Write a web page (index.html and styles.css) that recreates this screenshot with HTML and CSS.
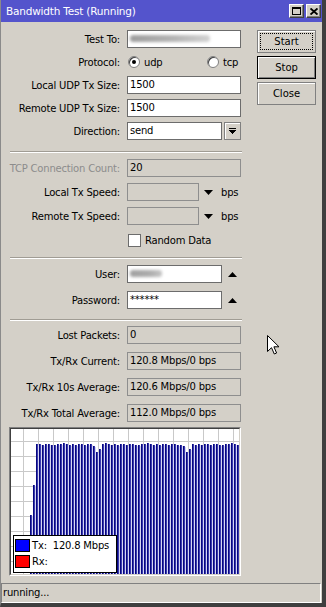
FILE: index.html
```html
<!DOCTYPE html>
<html lang="en">
<head>
    <meta charset="UTF-8">
    <title>Bandwidth Test (Running)</title>
    <link rel="stylesheet" href="styles.css">
</head>
<body>
    <div class="window">
        <div class="titlebar">
            <span class="title">Bandwidth Test (Running)</span>
            <div class="title-buttons">
                <span class="tbtn">
                    <svg width="9" height="8" viewBox="0 0 9 8" shape-rendering="crispEdges"><path d="M0 0h9v8h-9z M1 2v5h7v-5z" fill="#000" fill-rule="evenodd"/></svg>
                </span>
                <span class="tbtn">
                    <svg width="8" height="7" viewBox="0 0 8 7"><path d="M0.5 0.5l7 6M7.5 0.5l-7 6" stroke="#000" stroke-width="1.9"/></svg>
                </span>
            </div>
        </div>

        <div class="main">
            <div class="form">
                <div class="section s1">
                    <div class="row">
                        <span class="label">Test To:</span>
                        <div class="field"><span class="smudge"></span></div>
                    </div>
                    <div class="row">
                        <span class="label">Protocol:</span>
                        <span class="choice first"><span class="radio checked"></span>udp</span>
                        <span class="choice"><span class="radio"></span>tcp</span>
                    </div>
                    <div class="row">
                        <span class="label">Local UDP Tx Size:</span>
                        <div class="field">1500</div>
                    </div>
                    <div class="row">
                        <span class="label">Remote UDP Tx Size:</span>
                        <div class="field">1500</div>
                    </div>
                    <div class="row">
                        <span class="label">Direction:</span>
                        <div class="field mid">send</div>
                        <span class="drop">
                            <svg width="7" height="6" viewBox="0 0 7 6" shape-rendering="crispEdges"><path d="M0 0h7v1h-7z M0 2h7l-3.5 4z" fill="#000"/></svg>
                        </span>
                    </div>
                </div>
                <div class="sep"></div>

                <div class="section s2">
                    <div class="row">
                        <span class="label disabled">TCP Connection Count:</span>
                        <div class="field off">20</div>
                    </div>
                    <div class="row">
                        <span class="label">Local Tx Speed:</span>
                        <div class="field short off"></div>
                        <svg class="arrow" width="9" height="5" viewBox="0 0 9 5"><path d="M0 0h9l-4.5 5z" fill="#000"/></svg>
                        <span class="unit">bps</span>
                    </div>
                    <div class="row">
                        <span class="label">Remote Tx Speed:</span>
                        <div class="field short off"></div>
                        <svg class="arrow" width="9" height="5" viewBox="0 0 9 5"><path d="M0 0h9l-4.5 5z" fill="#000"/></svg>
                        <span class="unit">bps</span>
                    </div>
                    <div class="row indent">
                        <span class="check"></span>
                        <span class="check-text">Random Data</span>
                    </div>
                </div>
                <div class="sep"></div>

                <div class="section s3">
                    <div class="row">
                        <span class="label">User:</span>
                        <div class="field mid"><span class="smudge small"></span></div>
                        <svg class="arrow up" width="9" height="5" viewBox="0 0 9 5"><path d="M0 5h9l-4.5 -5z" fill="#000"/></svg>
                    </div>
                    <div class="row">
                        <span class="label">Password:</span>
                        <div class="field mid">******</div>
                        <svg class="arrow up" width="9" height="5" viewBox="0 0 9 5"><path d="M0 5h9l-4.5 -5z" fill="#000"/></svg>
                    </div>
                </div>
                <div class="sep"></div>

                <div class="section s4">
                    <div class="row">
                        <span class="label">Lost Packets:</span>
                        <div class="field off">0</div>
                    </div>
                    <div class="row">
                        <span class="label">Tx/Rx Current:</span>
                        <div class="field off">120.8 Mbps/0 bps</div>
                    </div>
                    <div class="row">
                        <span class="label">Tx/Rx 10s Average:</span>
                        <div class="field off">120.6 Mbps/0 bps</div>
                    </div>
                    <div class="row">
                        <span class="label">Tx/Rx Total Average:</span>
                        <div class="field off">112.0 Mbps/0 bps</div>
                    </div>
                </div>

                <div class="graph">
                    <div class="plot">
                        <svg width="228" height="145" viewBox="0 0 228 145" shape-rendering="crispEdges">
                            <defs>
                                <pattern id="grid" width="15" height="15" x="12" y="12" patternUnits="userSpaceOnUse">
                                    <rect width="15" height="1" fill="#c9c9c9"/>
                                    <rect width="1" height="15" fill="#c9c9c9"/>
                                </pattern>
                            </defs>
                            <rect width="228" height="145" fill="#fff"/>
                            <rect width="228" height="145" fill="url(#grid)"/>
                            <g id="bars"></g>
                        </svg>
                        <div class="legend">
                            <div class="item"><span class="swatch tx"></span>Tx:&nbsp; 120.8 Mbps</div>
                            <div class="item"><span class="swatch rx"></span>Rx:</div>
                        </div>
                    </div>
                </div>
            </div>

            <div class="actions">
                <button class="btn focus">Start</button>
                <button class="btn default">Stop</button>
                <button class="btn">Close</button>
            </div>
        </div>

        <div class="status">running...</div>

        <svg class="cursor" width="13" height="20" viewBox="0 0 13 20">
            <path d="M0.5 0.5V16.5L4.5 12.7L7.3 19L9.6 18L6.9 11.8H12Z" fill="#fff" stroke="#000" stroke-width="1" stroke-linejoin="miter"/>
        </svg>
    </div>

    <script>
        // Tx bars: two ramp-up samples, then steady around 120 Mbps with two dips
        const special = { 0: 86, 1: 56, 21: 17, 22: 23, 23: 20, 51: 17, 52: 23, 53: 20 };
        const jitter = [0, 1, 0, 0, 1, 0, 0, 1, 1, 0, 0, -1, 0, 1];
        const bars = document.getElementById("bars");

        function addRect(x, y, w, color) {
            const r = document.createElementNS("http://www.w3.org/2000/svg", "rect");
            r.setAttribute("x", x);
            r.setAttribute("y", y);
            r.setAttribute("width", w);
            r.setAttribute("height", 145 - y);
            r.setAttribute("fill", color);
            bars.appendChild(r);
        }

        for (let i = 0; i < 70; i++) {
            let top = 15 + jitter[i % jitter.length];
            if (i in special) top = special[i];
            const x = 19 + i * 3;
            addRect(x, top, 1, "#07077f");
            addRect(x + 1, top, 1, "#3b3bb0");
            if (i < 69) addRect(x + 2, top + 1, 1, "#d6d6f2");
        }
    </script>
</body>
</html>
```

FILE: styles.css
```css
body {
    margin: 0;
    font-family: Tahoma, "DejaVu Sans", sans-serif;
    font-size: 10px;
    letter-spacing: -0.2px;
    color: #000;
}
.window {
    position: relative;
    width: 326px;
    height: 607px;
    box-sizing: border-box;
    background: #d4d0c8;
    border-left: 1px solid #8a8a8a;
    border-right: 4px solid #3f3f3f;
    border-bottom: 4px solid #3f3f3f;
    overflow: hidden;
}
.titlebar {
    height: 22px;
    background: #5454cc;
    color: #fff;
    display: flex;
    align-items: center;
    justify-content: space-between;
    padding: 0 1px 0 5px;
}
.title {
    font-size: 10.5px;
}
.title-buttons {
    display: flex;
    gap: 2px;
}
.tbtn {
    width: 15px;
    height: 14px;
    box-sizing: border-box;
    background: #d4d0c8;
    border: 1px solid;
    border-color: #fff #404040 #404040 #fff;
    box-shadow: inset -1px -1px #808080;
    display: flex;
    align-items: center;
    justify-content: center;
}

.main {
    display: flex;
}
.form {
    width: 246px;
    padding-top: 8px;
}
.actions {
    margin-left: 10px;
    padding-top: 8px;
    display: flex;
    flex-direction: column;
    gap: 3px;
}
.btn {
    width: 59px;
    height: 23px;
    box-sizing: border-box;
    padding: 0;
    font: inherit;
    color: #000;
    background: #d4d0c8;
    border: 1px solid #808080;
    box-shadow: inset 1px 1px #fff;
}
.btn.focus {
    outline: 1px dotted #000;
    outline-offset: -4px;
}
.btn.default {
    border-color: #000;
    box-shadow: inset 1px 1px #fff, inset -1px -1px #808080;
}

.section {
    display: flex;
    flex-direction: column;
}
.s1 { gap: 5px; margin-bottom: 11px; }
.s2 { gap: 6px; margin-top: 6px; margin-bottom: 8px; }
.s3 { gap: 8px; margin-top: 6px; margin-bottom: 10px; }
.s4 { gap: 8px; margin-top: 5px; }
.sep {
    margin-left: 9px;
    width: 232px;
    border-top: 1px solid #a09c94;
    border-bottom: 1px solid #fff;
}

.row {
    display: flex;
    align-items: center;
    height: 18px;
}
.row.indent {
    padding-left: 126px;
}
.label {
    width: 119px;
    margin-right: 7px;
    display: flex;
    justify-content: flex-end;
    white-space: nowrap;
    flex-shrink: 0;
}
.label.disabled {
    color: #8c8c8c;
}
.field {
    box-sizing: border-box;
    width: 114px;
    height: 18px;
    border: 1px solid #6c6c6c;
    background: #fff;
    padding: 0 2px;
    line-height: 16px;
    white-space: nowrap;
    overflow: hidden;
    flex-shrink: 0;
}
.field.mid { width: 95px; }
.field.short { width: 72px; }
.field.off {
    background: #d4d0c8;
    border-color: #8e8e8e;
}
.smudge {
    display: block;
    width: 80px;
    height: 7px;
    margin-top: 4px;
    border-radius: 3px;
    background: linear-gradient(90deg, #9c9c9c, #b4b4b4 55%, #d2d2d2);
    filter: blur(1.5px);
}
.smudge.small {
    width: 32px;
    background: linear-gradient(90deg, #a0a0a0, #acacac 60%, #c4c4c4);
}

.choice {
    display: flex;
    align-items: center;
    gap: 4px;
}
.choice.first {
    width: 80px;
}
.radio {
    position: relative;
    width: 12px;
    height: 12px;
    box-sizing: border-box;
    border-radius: 50%;
    background: #fff;
    border: 1px solid #808080;
    box-shadow: inset 1px 1px #404040;
}
.choice.first .radio {
    margin-left: 1px;
}
.radio.checked::after {
    content: "";
    position: absolute;
    left: 3px;
    top: 3px;
    width: 4px;
    height: 4px;
    border-radius: 50%;
    background: #000;
}
.check {
    width: 13px;
    height: 13px;
    box-sizing: border-box;
    margin-left: 1px;
    background: #fff;
    border: 1px solid #6c6c6c;
}
.check-text {
    margin-left: 4px;
}
.drop {
    width: 17px;
    height: 18px;
    box-sizing: border-box;
    margin-left: 2px;
    border: 1px solid #808080;
    box-shadow: inset 1px 1px #fff;
    display: flex;
    align-items: center;
    justify-content: center;
}
.arrow {
    margin-left: 5px;
}
.arrow.up {
    margin-left: 6px;
}
.unit {
    margin-left: 8px;
}

.graph {
    margin: 5px 0 0 8px;
    width: 232px;
    height: 149px;
    box-sizing: border-box;
    border: 1px solid;
    border-color: #808080 #fff #fff #808080;
}
.plot {
    position: relative;
    width: 230px;
    height: 147px;
    box-sizing: border-box;
    border: 1px solid;
    border-color: #404040 #d4d0c8 #d4d0c8 #404040;
}
.plot svg {
    display: block;
}
.legend {
    position: absolute;
    left: 2px;
    top: 106px;
    width: 104px;
    height: 38px;
    box-sizing: border-box;
    padding: 3px 1px;
    background: #fff;
    border: 1px solid #000;
    display: flex;
    flex-direction: column;
    gap: 3px;
}
.item {
    display: flex;
    align-items: center;
    height: 13px;
}
.swatch {
    width: 15px;
    height: 13px;
    box-sizing: border-box;
    margin-right: 2px;
    border: 1px solid #000;
}
.swatch.tx { background: #0000ff; }
.swatch.rx { background: #ff0000; }

.status {
    margin: 7px 1px 0 0;
    height: 20px;
    box-sizing: border-box;
    border: 1px solid;
    border-color: #808080 #fff #fff #808080;
    padding-left: 1px;
    line-height: 18px;
}
.cursor {
    position: absolute;
    left: 266px;
    top: 335px;
}
```
